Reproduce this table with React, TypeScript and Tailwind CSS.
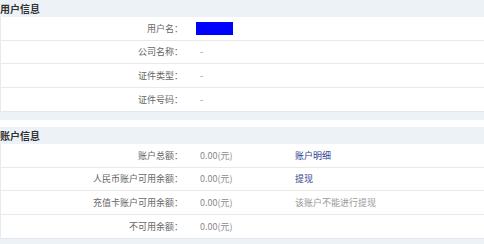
import React from "react";

const font = { fontFamily: '"Noto Sans CJK SC", "Noto Sans", sans-serif' };

type Row = { label: string; value: React.ReactNode; extra?: React.ReactNode };

function Section({ title, rows }: { title: string; rows: Row[] }) {
  return (
    <div className="bg-[#edf2f7]">
      <div className="h-[17px] flex items-center text-[10px] font-bold text-[#333] leading-none">
        {title}
      </div>
      <div className="bg-white border-l border-[#e6ebf0]">
        {rows.map((r, i) => (
          <div
            key={i}
            className={`flex items-center h-[23.5px] text-[9px] leading-none ${i < rows.length - 1 ? "border-b border-[#e9e9e9]" : ""}`}
          >
            <div className="w-[182px] text-right text-[#666]">{r.label}</div>
            <div className="w-[112px] pl-[17px] text-[#8a8a8a]">{r.value}</div>
            <div className="flex-1">{r.extra}</div>
          </div>
        ))}
      </div>
      <div className="h-[9px] border-t border-[#e3e8ee]" />
    </div>
  );
}

export default function App() {
  const link = "text-[#2d3f8f]";
  return (
    <div className="w-[484px] h-[244px] bg-white overflow-hidden" style={font}>
      <Section
        title="用户信息"
        rows={[
          { label: "用户名：", value: <div className="w-[37px] h-[13px] bg-[#0000ff] -ml-[4px]" /> },
          { label: "公司名称：", value: "-" },
          { label: "证件类型：", value: "-" },
          { label: "证件号码：", value: "-" },
        ]}
      />
      <div className="h-[7px]" />
      <Section
        title="账户信息"
        rows={[
          { label: "账户总额：", value: "0.00(元)", extra: <span className={link}>账户明细</span> },
          { label: "人民币账户可用余额：", value: "0.00(元)", extra: <span className={link}>提现</span> },
          { label: "充值卡账户可用余额：", value: "0.00(元)", extra: <span className="text-[#999]">该账户不能进行提现</span> },
          { label: "不可用余额：", value: "0.00(元)" },
        ]}
      />
    </div>
  );
}
